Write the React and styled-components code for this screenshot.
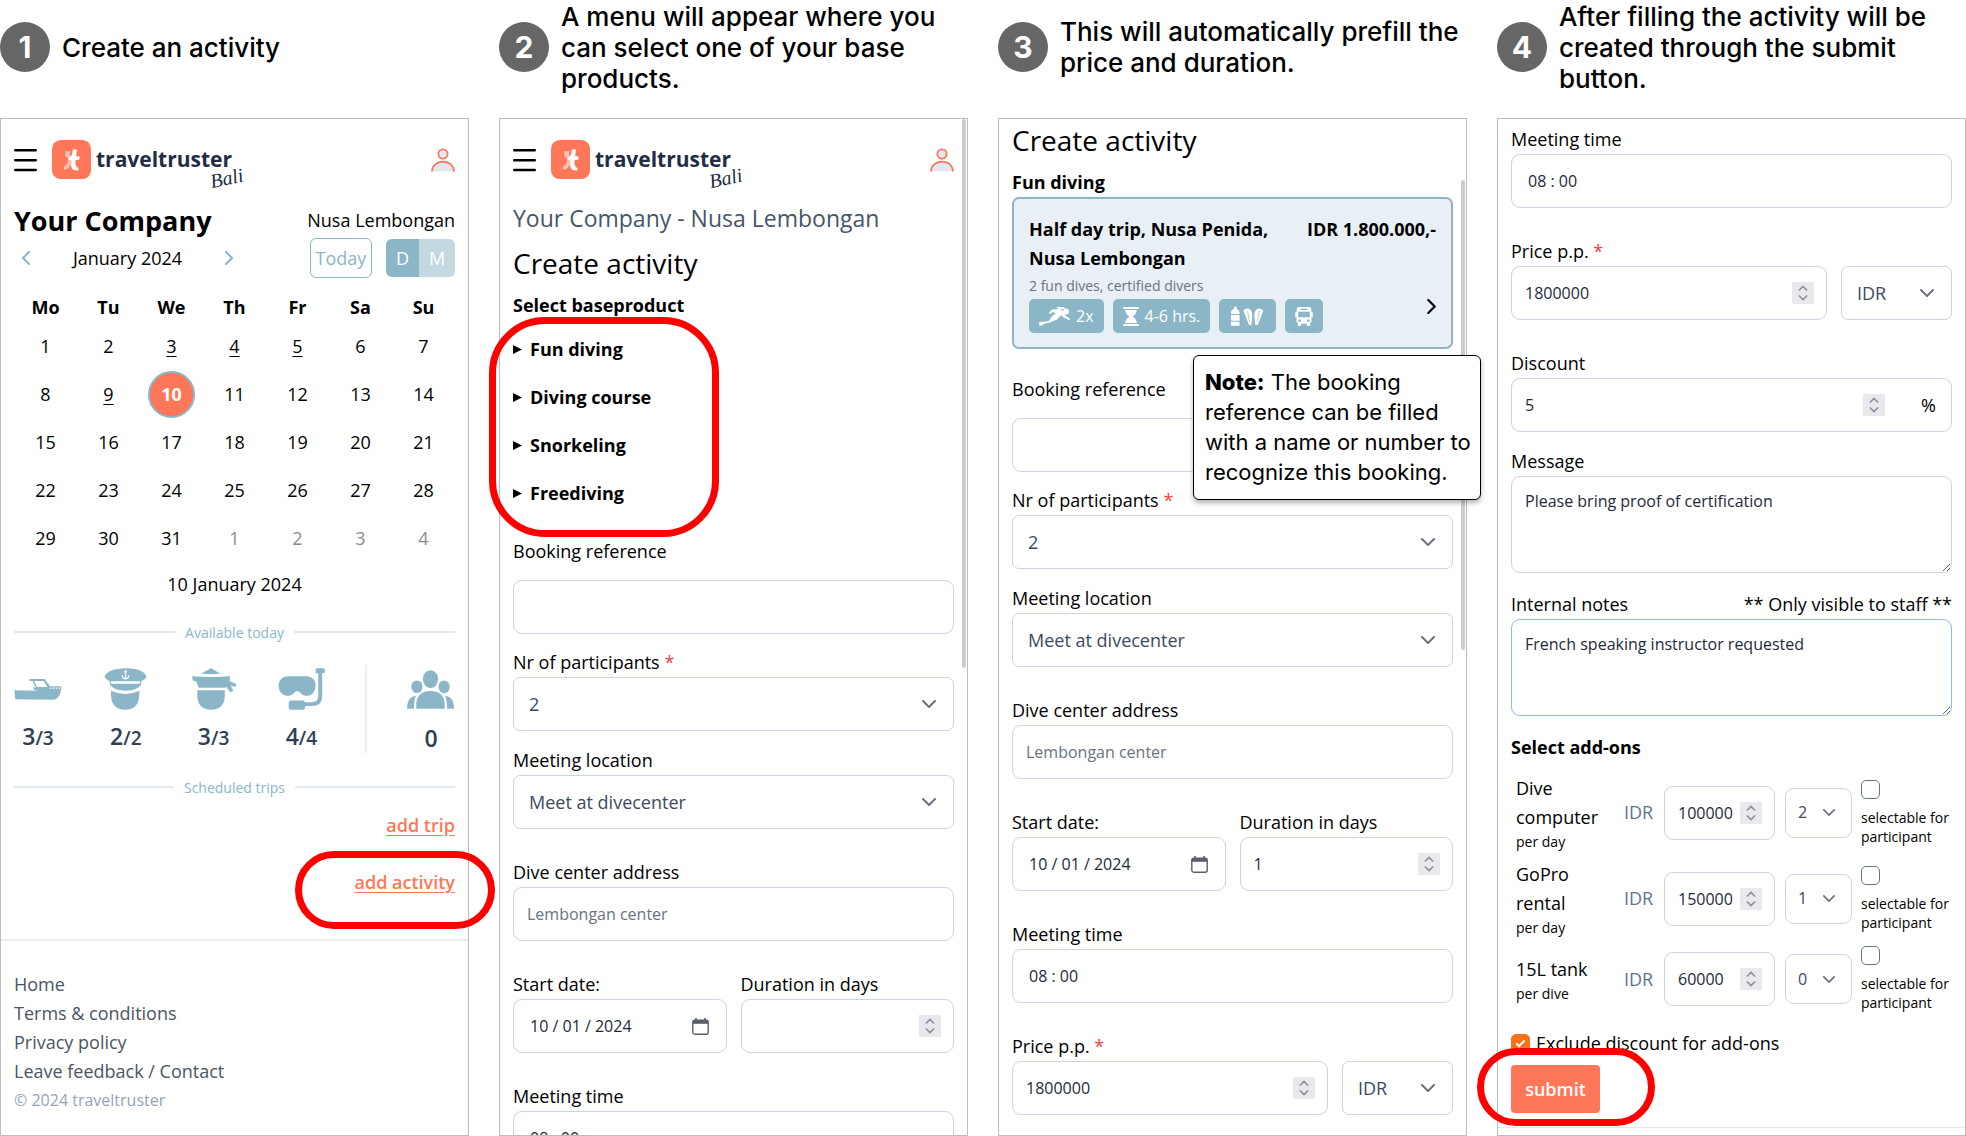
import React, { useId } from "react";
import styled, { createGlobalStyle, css } from "styled-components";

const color = {
  teal: "#8bb6c8",
  tealSoft: "#c3d9e2",
  tealPale: "#e8f0f6",
  coral: "#ff7759",
  ring: "#ff0000",
  frame: "#bdbdbd",
  line: "#e2e8f0",
  field: "#cbd5e1",
  ink: "#1e293b",
  slate: "#475569",
  mute: "#6b7280",
};

const Global = createGlobalStyle`
  *, *::before, *::after { box-sizing: border-box; }
  body { margin: 0; background: #fff; color: #000; font-family: "Open Sans", "Noto Sans", sans-serif; font-size: 18px; line-height: 29px; }
  h1, h2, h3, p, ol, ul { margin: 0; padding: 0; font: inherit; }
  button, input, select, textarea { font: inherit; color: inherit; margin: 0; }
  button { cursor: pointer; }
`;

/* ---------- page ---------- */

const Page = styled.main`
  display: grid;
  grid-template-columns: repeat(4, minmax(0, 1fr));
  gap: 30px;
  height: 100vh;
`;
const Column = styled.section`
  position: relative;
  display: flex;
  flex-direction: column;
  min-height: 0;
`;
const StepHeader = styled.header`
  display: flex;
  align-items: center;
  gap: 12px;
  min-height: 94px;
  margin-bottom: 24px;
  font-family: Inter, sans-serif;
`;
const StepNumber = styled.span`
  flex: none;
  display: grid;
  place-items: center;
  width: 50px;
  height: 50px;
  border-radius: 50%;
  background: #666;
  color: #fff;
  font-size: 30px;
  font-weight: 700;
`;
const StepTitle = styled.h2`
  font-size: 26px;
  line-height: 31px;
  font-weight: 500;
`;
const Panel = styled.div`
  position: relative;
  flex: 1;
  min-height: 0;
  overflow: hidden;
  border: 1px solid ${color.frame};
  padding: ${(p) => p.$top}px 13px 0;
`;
const ScrollThumb = styled.div`
  position: absolute;
  right: 1px;
  top: ${(p) => p.$top}px;
  width: 4px;
  height: ${(p) => p.$length}px;
  border-radius: 2px;
  background: #ccc;
`;
const Ring = styled.div`
  position: absolute;
  border: 7px solid ${color.ring};
  pointer-events: none;
`;
const TripRing = styled(Ring)`
  right: -26px;
  top: 851px;
  width: 200px;
  height: 78px;
  border-radius: 39px;
`;
const MenuRing = styled(Ring)`
  left: -10px;
  top: 317px;
  width: 230px;
  height: 220px;
  border-radius: 56px;
`;
const SubmitRing = styled(Ring)`
  left: -20px;
  top: 1048px;
  width: 178px;
  height: 78px;
  border-radius: 39px;
`;
const Note = styled.aside`
  position: absolute;
  right: -14px;
  top: 355px;
  width: 288px;
  padding: 11px 0 12px 11px;
  border: 1px solid #000;
  border-radius: 6px;
  background: #fff;
  box-shadow: 0 3px 5px rgba(0, 0, 0, 0.3);
  font-family: Inter, sans-serif;
  font-size: 22px;
  line-height: 30px;
  strong { font-weight: 800; }
`;

/* ---------- brand bar ---------- */

const Bar = styled.div`
  display: flex;
  align-items: center;
  height: 39px;
  margin-bottom: 24px;
`;
const IconButton = styled.button`
  display: flex;
  padding: 0;
  border: 0;
  background: none;
`;
const Brand = styled.a`
  position: relative;
  display: flex;
  align-items: center;
  gap: 5px;
  margin: 0 auto 0 15px;
  color: #222d45;
  font-size: 21px;
  font-weight: 700;
  text-decoration: none;
`;
const Region = styled.span`
  position: absolute;
  right: -11px;
  bottom: -14px;
  transform: rotate(-12deg);
  font-family: "Liberation Serif", serif;
  font-style: italic;
  font-weight: 400;
  font-size: 20px;
`;

/* ---------- calendar ---------- */

const Between = styled.div`
  display: flex;
  align-items: center;
  justify-content: space-between;
`;
const Company = styled.h1`
  font-size: 27px;
  line-height: 35px;
  font-weight: 700;
`;
const Tools = styled(Between)`
  height: 40px;
  margin-bottom: 15px;
`;
const MonthNav = styled.div`
  display: flex;
  align-items: center;
  justify-content: space-between;
  width: 211px;
  margin-left: 8px;
`;
const Toggles = styled.div`
  display: flex;
  align-items: center;
  gap: 14px;
`;
const TodayButton = styled.button`
  width: 62px;
  height: 40px;
  padding: 0;
  border: 1px solid ${color.teal};
  border-radius: 6px;
  background: #fff;
  color: ${color.teal};
`;
const ModeGroup = styled.div`
  display: flex;
  border-radius: 6px;
  overflow: hidden;
`;
const ModeButton = styled.button`
  width: ${(p) => (p.$on ? 33 : 36)}px;
  height: 38px;
  padding: 0;
  border: 0;
  background: ${(p) => (p.$on ? color.teal : color.tealSoft)};
  color: #fff;
`;
const Calendar = styled.table`
  width: 100%;
  table-layout: fixed;
  border-collapse: collapse;
  text-align: center;
  th { height: 29px; padding: 0; font-weight: 700; }
  td { height: 48px; padding: 0; }
`;
const Day = styled.span`
  ${(p) => p.$other && css`color: #8c8c8c;`}
  ${(p) => p.$linked && css`text-decoration: underline; text-underline-offset: 3px;`}
  ${(p) => p.$today && css`
    display: grid;
    place-items: center;
    width: 47px;
    height: 47px;
    margin: 0 auto;
    border: 2px solid ${color.teal};
    border-radius: 50%;
    background: ${color.coral};
    color: #fff;
    font-weight: 700;
  `}
`;
const Selected = styled.p`
  margin: 8px 0 20px;
  text-align: center;
`;
const Divider = styled.h3`
  display: flex;
  align-items: center;
  gap: 10px;
  height: 26px;
  color: ${color.teal};
  font-size: 14px;
  &::before, &::after { content: ""; flex: 1; height: 2px; background: ${color.line}; }
`;
const Resources = styled.ul`
  display: flex;
  justify-content: space-between;
  align-items: stretch;
  height: 88px;
  margin: 20px 0 21px;
  list-style: none;
`;
const Resource = styled.li`
  display: flex;
  flex-direction: column;
  align-items: center;
  justify-content: space-between;
  width: 48px;
  padding: 3px 0 0;
  color: #2f3e54;
  font-size: 23px;
  font-weight: 600;
  small { font-size: 19px; }
`;
const Art = styled.span`
  display: flex;
  align-items: center;
  height: 42px;
  color: ${color.teal};
`;
const Splitter = styled.li`
  width: 2px;
  background: #e5f0f5;
`;
const Actions = styled.div`
  display: flex;
  flex-direction: column;
  align-items: flex-end;
  gap: 28px;
  margin: 11px 0 42px;
`;
const ActionLink = styled.a`
  color: ${color.coral};
  font-weight: 600;
  text-underline-offset: 3px;
`;
const Footer = styled.footer`
  display: flex;
  flex-direction: column;
  align-items: flex-start;
  margin: 0 -13px;
  padding: 29px 13px 0;
  border-top: 2px solid #e9edf3;
`;
const FootLink = styled.a`
  color: #4b5563;
  text-decoration: none;
`;
const Copyright = styled.small`
  color: #94a3b8;
  font-size: 16px;
`;

/* ---------- forms ---------- */

const Crumb = styled.p`
  margin-bottom: 13px;
  color: ${color.slate};
  font-size: 23px;
  line-height: 30px;
  font-weight: 500;
`;
const FormTitle = styled.h1`
  margin-bottom: 10px;
  font-size: 28px;
  line-height: 35px;
  font-weight: 500;
`;
const Strong = styled.h3`
  font-weight: 700;
`;
const Menu = styled.ul`
  margin: 5px 0 20px;
  list-style: none;
`;
const MenuItem = styled.li`
  height: 48px;
  display: flex;
  align-items: center;
`;
const MenuButton = styled.button`
  display: flex;
  align-items: center;
  gap: 8px;
  padding: 0;
  border: 0;
  background: none;
  font-weight: 700;
`;
const FieldBlock = styled.div`
  display: flex;
  flex-direction: column;
  min-width: 0;
  flex: 1;
  gap: ${(p) => p.$inner || 0}px;
  margin-bottom: ${(p) => p.$after || 0}px;
`;
const LabelRow = styled.div`
  display: flex;
  justify-content: space-between;
`;
const Required = styled.span`
  color: #ef4444;
`;
const Controls = styled.div`
  display: flex;
  gap: 14px;
  align-items: center;
`;
const Frame = styled.div`
  position: relative;
  display: flex;
  align-items: center;
  flex: ${(p) => (p.$width ? "none" : 1)};
  width: ${(p) => (p.$width ? p.$width + "px" : "auto")};
  min-width: 0;
  height: ${(p) => p.$height || 54}px;
  min-height: ${(p) => p.$height || 54}px;
  border: 1px solid ${color.field};
  border-radius: ${(p) => p.$radius || 9}px;
  padding-right: ${(p) => p.$end || 0}px;
  background: #fff;
`;
const Input = styled.input`
  flex: 1;
  min-width: 0;
  width: 100%;
  height: 50px;
  padding: 0 0 0 ${(p) => p.$start || 13}px;
  border: 0;
  outline: 0;
  background: none;
  color: ${color.ink};
  font-size: 16px;
  appearance: textfield;
  &::placeholder { color: ${color.mute}; opacity: 1; }
  &::-webkit-inner-spin-button { appearance: none; margin: 0; }
`;
const Select = styled.select`
  width: 100%;
  height: 100%;
  padding: 0 0 0 ${(p) => p.$start || 15}px;
  border: 0;
  outline: 0;
  appearance: none;
  background: none;
  color: #3d4a5e;
  font-size: ${(p) => p.$size || 18}px;
`;
const Caret = styled.span`
  position: absolute;
  right: ${(p) => p.$right || 17}px;
  top: 0;
  bottom: 0;
  display: flex;
  align-items: center;
  pointer-events: none;
`;
const Spin = styled.span`
  flex: none;
  display: grid;
  place-items: center;
  width: 22px;
  height: 22px;
  background: #e9e8ed;
`;
const Unit = styled.span`
  padding-left: 36px;
  font-size: 18px;
`;
const TextArea = styled.textarea`
  display: block;
  width: 100%;
  height: 97px;
  padding: 10px 13px;
  border: 1px solid ${(p) => (p.$active ? "#93b8ec" : color.field)};
  border-radius: 9px;
  outline: 0;
  resize: vertical;
  color: ${color.ink};
  font-size: 16px;
`;

/* ---------- product card ---------- */

const Card = styled.article`
  height: 152px;
  margin-bottom: 26px;
  padding: 16px 15px 14px;
  border: 2px solid ${color.teal};
  border-radius: 7px;
  background: ${color.tealPale};
`;
const CardHead = styled.div`
  display: flex;
  justify-content: space-between;
  gap: 12px;
  font-weight: 700;
`;
const CardTitle = styled.h3`
  max-width: 250px;
  font-weight: 700;
`;
const Price = styled.span`
  white-space: nowrap;
`;
const CardText = styled.p`
  color: ${color.mute};
  font-size: 14px;
  line-height: 26px;
`;
const CardFoot = styled.div`
  display: flex;
  align-items: flex-start;
  justify-content: space-between;
`;
const Badges = styled.ul`
  display: flex;
  gap: 9px;
  list-style: none;
`;
const Badge = styled.li`
  display: flex;
  align-items: center;
  gap: 6px;
  height: 34px;
  padding: 0 10px;
  border-radius: 5px;
  background: ${color.teal};
  color: #fff;
  font-size: 16px;
`;

/* ---------- add-ons ---------- */

const AddOns = styled.table`
  width: 100%;
  margin: 8px 0 12px;
  border-collapse: collapse;
  table-layout: fixed;
  text-align: left;
  th, td { padding: 4px 5px 5px; vertical-align: middle; font-weight: 400; }
  td:last-child { padding-right: 0; }
`;
const Col = styled.col`
  width: ${(p) => p.$w}px;
`;
const Small = styled.small`
  display: block;
  font-size: 14px;
  line-height: 19px;
`;
const Currency = styled.span`
  color: #64748b;
`;
const Pick = styled.label`
  display: flex;
  flex-direction: column;
  align-items: flex-start;
  gap: 9px;
`;
const Tick = styled.input`
  flex: none;
  display: grid;
  place-items: center;
  width: 19px;
  height: 19px;
  margin: 0;
  appearance: none;
  border: 1px solid #64748b;
  border-radius: 5px;
  background: #fff;
  &:checked { border-color: #f97316; background: #f97316; }
  &:checked::after {
    content: "";
    width: 5px;
    height: 9px;
    margin-top: -2px;
    border: solid #fff;
    border-width: 0 2px 2px 0;
    transform: rotate(45deg);
  }
`;
const Exclude = styled.label`
  display: flex;
  align-items: center;
  gap: 6px;
  margin-bottom: 7px;
`;
const Submit = styled.button`
  display: block;
  width: 89px;
  height: 48px;
  padding: 0;
  border: 0;
  border-radius: 4px;
  background: ${color.coral};
  color: #fff;
  font-weight: 600;
`;
const Rule = styled.hr`
  height: 1px;
  margin: 14px -13px 0;
  border: 0;
  background: ${color.line};
`;

/* ---------- drawings ---------- */

const Chevron = ({ dir = "down", w = 14, h = 8, stroke = "#6b7280", sw = 2 }) => {
  const d = { down: "M1 1l6 6 6-6", left: "M7 1L1 7l6 6", right: "M1 1l6 6-6 6" }[dir];
  const box = dir === "down" ? "0 0 14 8" : "0 0 8 14";
  return (
    <svg width={w} height={h} viewBox={box} fill="none" stroke={stroke} strokeWidth={sw} strokeLinecap="round" aria-hidden="true">
      <path d={d} />
    </svg>
  );
};
const BurgerIcon = () => (
  <svg width="23" height="24" viewBox="0 0 23 24" stroke="#000" strokeWidth="2.4" strokeLinecap="round" aria-hidden="true">
    <path d="M1.2 2.2h20.6M1.2 12.2h20.6M1.2 22h20.6" />
  </svg>
);
const UserIcon = () => (
  <svg width="24" height="24" viewBox="0 0 24 24" stroke={color.coral} strokeWidth="1.8" fill="#e2e8f0" aria-hidden="true">
    <circle cx="12" cy="6" r="4.6" />
    <path d="M1 23.5C1 17.6 5.8 13.6 12 13.6s11 4 11 9.9" />
  </svg>
);
const LogoMark = () => (
  <svg width="39" height="39" viewBox="0 0 115 115" aria-hidden="true">
    <rect width="115" height="115" rx="26" fill={color.coral} />
    <path d="M39 32q8 3 15 0l-1 14 8 8-5 16q-4 16-20 18l-2-10q14-4 13-22-1-6-8-8z" fill="#ffc0b0" />
    <path d="M61 29q7-4 13 0l-3 19q6-1 11 1l-2 9-10 1q-4 17 8 24v7Q56 92 56 72l2-12-9-2 1-6q8-3 10-12z" fill="#fff" />
  </svg>
);
const SpinIcon = () => (
  <svg width="10" height="16" viewBox="0 0 10 16" fill="none" stroke="#8f8f9d" strokeWidth="1.7" strokeLinecap="round" aria-hidden="true">
    <path d="M1.4 5L5 1.4 8.6 5M1.4 11L5 14.6 8.6 11" />
  </svg>
);
const CalendarIcon = () => (
  <svg width="17" height="17" viewBox="0 0 17 17" fill="none" stroke="#5b5f6b" aria-hidden="true">
    <rect x=".8" y="2.2" width="15.4" height="14" rx="2" strokeWidth="1.4" />
    <path d="M1 4h15" strokeWidth="3.6" />
    <path d="M4 0v3M13 0v3" strokeWidth="1.6" />
  </svg>
);
const Triangle = () => (
  <svg width="9" height="9" viewBox="0 0 9 9" aria-hidden="true"><path d="M0 0l9 4.5L0 9z" /></svg>
);
const BoatIcon = () => (
  <svg width="48" height="21" viewBox="0 0 144 64" fill="currentColor" aria-hidden="true">
    <path d="M3 62L0 34l62 2q30-8 80-6 0 20-14 30-4 3-10 3z" />
    <path d="M46 0h46l18 24-4 10H60l-3-8h8L55 6h-9zm14 6l9 18h32L89 6z" fillRule="evenodd" />
    <path d="M108 22h34v4h-34zM113 24h4v10h-4zM122 24h4v10h-4zM131 24h4v10h-4zM139 24h3v10h-3z" />
  </svg>
);
const CaptainIcon = () => (
  <svg width="43" height="42" viewBox="0 0 128 128" fill="currentColor" aria-hidden="true">
    <path d="M0 26Q12 2 64 1t64 25q-4 12-18 14H18Q4 38 0 26z" />
    <path d="M16 38h4v10h88V38h4v12Q98 69 64 69T16 50z" />
    <path d="M20 69q44 20 86 0v15q-2 43-43 43T20 84z" />
    <g stroke="#fff" strokeWidth="4" fill="none">
      <circle cx="64" cy="11" r="2" />
      <path d="M64 14v18M54 22q1 11 10 11t10-11" />
    </g>
  </svg>
);
const CrewIcon = () => (
  <svg width="46" height="42" viewBox="0 0 138 128" fill="currentColor" aria-hidden="true">
    <path d="M60 1l28 16q-28 4-58 0z" />
    <path d="M2 25q58 5 116 0l-1 15 20 9-2 9-15-5 8 17-10 4-12-18-2 4H22l-6-17L4 37z" />
    <path d="M18 68h84v18q-2 41-42 41T18 86z" />
  </svg>
);
const MaskIcon = () => (
  <svg width="47" height="42" viewBox="0 0 142 128" fill="currentColor" aria-hidden="true">
    <path d="M30 25h56q28 2 28 29-2 31-28 31-12 0-19-10-9-10-18 0-8 10-19 10Q2 83 1 54 2 27 30 25z" />
    <path d="M128 8v78q0 24-26 24H78" fill="none" stroke="currentColor" strokeWidth="12" />
    <rect x="114" y="1" width="28" height="15" rx="4" />
    <rect x="32" y="99" width="50" height="28" rx="8" />
  </svg>
);
const GroupIcon = () => (
  <svg width="47" height="39" viewBox="0 0 142 117" fill="currentColor" aria-hidden="true">
    <ellipse cx="71" cy="27" rx="23" ry="27" />
    <ellipse cx="30" cy="50" rx="17" ry="19" />
    <ellipse cx="112" cy="50" rx="17" ry="19" />
    <path d="M28 117v-17q4-37 43-37t43 37v17z" />
    <path d="M0 117q0-38 27-39-6 14-6 39zM142 117q0-38-27-39 6 14 6 39z" />
  </svg>
);
const DiverIcon = () => (
  <svg width="31" height="19" viewBox="0 0 92 56" fill="#fff" aria-hidden="true">
    <path d="M0 44l28-2 12-16 10-8-10-3-6 6-5-4 10-10 24-1 8 6 8 14 13 8-2 5-16-7-8-8-14 14-20 8-14 3-16 8z" />
    <path d="M52 0h22l4 5-20 2z" />
    <circle cx="80" cy="13" r="9" />
  </svg>
);
const HourglassIcon = () => (
  <svg width="16" height="19" viewBox="0 0 46 56" fill="#fff" aria-hidden="true">
    <path d="M0 0h46v6H0zM0 50h46v6H0zM6 9h34q0 11-12 19 12 8 12 19H6q0-11 12-19Q6 20 6 9z" />
  </svg>
);
const GearIcon = () => (
  <svg width="37" height="20" viewBox="-5 0 106 58" fill="#fff" aria-hidden="true">
    <path d="M9 2h8v7q8 3 8 10v4H0v-4Q0 12 9 9zM0 26h25v17H0zM0 46h25v11H0z" />
    <path d="M36 14q8-10 18-5 8 4 8 20L60 54q-5 4-8 0z" />
    <path d="M94 14Q86 4 76 9q-8 4-8 20l2 25q5 4 8 0z" />
    <path d="M48 14l6 32M82 14l-6 32" stroke={color.teal} strokeWidth="2" />
  </svg>
);
const BusIcon = () => (
  <svg width="18" height="19" viewBox="0 0 52 56" fill="#fff" aria-hidden="true">
    <path fillRule="evenodd" d="M12 0h28q8 0 8 9v7h4v14h-4v16h-4v7q0 3-5 3t-5-3v-4H18v4q0 3-5 3t-5-3v-7H4V30H0V16h4V9q0-9 8-9zm4 5v4h20V5zM9 14v16h34V14zm4 22a4 4 0 100 8 4 4 0 000-8zm26 0a4 4 0 100 8 4 4 0 000-8z" />
  </svg>
);

/* ---------- composed parts ---------- */

const Step = ({ n, title, top, over, children }) => (
  <Column>
    <StepHeader>
      <StepNumber>{n}</StepNumber>
      <StepTitle>{title}</StepTitle>
    </StepHeader>
    <Panel $top={top}>{children}</Panel>
    {over}
  </Column>
);

const BrandBar = () => (
  <Bar>
    <IconButton type="button" aria-label="Menu"><BurgerIcon /></IconButton>
    <Brand href="#home">
      <LogoMark />
      traveltruster
      <Region>Bali</Region>
    </Brand>
    <IconButton type="button" aria-label="Account"><UserIcon /></IconButton>
  </Bar>
);

const Field = ({ label, required, aside, inner, after, children }) => {
  const id = useId();
  return (
    <FieldBlock $inner={inner} $after={after}>
      <LabelRow>
        <label htmlFor={id}>
          {label}
          {required && <Required> *</Required>}
        </label>
        {aside && <span>{aside}</span>}
      </LabelRow>
      {children(id)}
    </FieldBlock>
  );
};

const Choice = ({ id, value, width, label, small }) => (
  <Frame $width={width} $height={small ? 50 : 54} $radius={small ? 9 : 7}>
    <Select id={id} aria-label={label} defaultValue={value} $start={small ? 12 : 15} $size={small ? 16 : 18}>
      <option>{value}</option>
    </Select>
    <Caret $right={small ? 16 : 17}><Chevron w={small ? 12 : 14} h={small ? 7 : 8} /></Caret>
  </Frame>
);

const NumberBox = ({ id, value, width, unit, label, end = 12 }) => (
  <Frame $width={width} $end={unit ? 15 : end}>
    <Input id={id} aria-label={label} type="number" defaultValue={value} />
    <Spin><SpinIcon /></Spin>
    {unit && <Unit>{unit}</Unit>}
  </Frame>
);

const TextField = ({ label, value, placeholder, start, inner, after }) => (
  <Field label={label} inner={inner} after={after}>
    {(id) => (
      <Frame>
        <Input id={id} type="text" defaultValue={value} placeholder={placeholder} $start={start} />
      </Frame>
    )}
  </Field>
);

const PriceField = () => (
  <Field label="Price p.p." required after={29}>
    {(id) => (
      <Controls>
        <NumberBox id={id} value="1800000" />
        <Choice label="Currency" value="IDR" width={111} />
      </Controls>
    )}
  </Field>
);

const BookingFields = ({ duration }) => (
  <>
    <TextField label="Booking reference" inner={14} after={14} />
    <Field label="Nr of participants" required after={15}>
      {(id) => <Controls><Choice id={id} value="2" /></Controls>}
    </Field>
    <Field label="Meeting location" after={29}>
      {(id) => <Controls><Choice id={id} value="Meet at divecenter" /></Controls>}
    </Field>
    <TextField label="Dive center address" placeholder="Lembongan center" after={29} />
    <Controls>
      <Field label="Start date:" after={29}>
        {(id) => (
          <Frame $end={17}>
            <Input id={id} type="text" defaultValue="10 / 01 / 2024" $start={16} />
            <CalendarIcon />
          </Frame>
        )}
      </Field>
      <Field label="Duration in days" after={29}>
        {(id) => <NumberBox id={id} value={duration} />}
      </Field>
    </Controls>
    <TextField label="Meeting time" value="08 : 00" start={16} after={29} />
  </>
);

const weekdays = ["Mo", "Tu", "We", "Th", "Fr", "Sa", "Su"];
const weeks = [0, 1, 2, 3, 4].map((w) => weekdays.map((_, d) => w * 7 + d + 1));
const linkedDays = [3, 4, 5, 9];

const resources = [
  { name: "Boats", icon: <BoatIcon />, free: 3, total: 3 },
  { name: "Captains", icon: <CaptainIcon />, free: 2, total: 2 },
  { name: "Crew", icon: <CrewIcon />, free: 3, total: 3 },
  { name: "Instructors", icon: <MaskIcon />, free: 4, total: 4 },
];

const addOns = [
  { name: "Dive computer", per: "per day", price: "100000", count: "2" },
  { name: "GoPro rental", per: "per day", price: "150000", count: "1" },
  { name: "15L tank", per: "per dive", price: "60000", count: "0" },
];

const CalendarPanel = () => (
  <>
    <BrandBar />
    <Between>
      <Company>Your Company</Company>
      <span>Nusa Lembongan</span>
    </Between>
    <Tools>
      <MonthNav>
        <IconButton type="button" aria-label="Previous month"><Chevron dir="left" w={8} h={14} stroke={color.teal} /></IconButton>
        <span>January 2024</span>
        <IconButton type="button" aria-label="Next month"><Chevron dir="right" w={8} h={14} stroke={color.teal} /></IconButton>
      </MonthNav>
      <Toggles>
        <TodayButton type="button">Today</TodayButton>
        <ModeGroup>
          <ModeButton type="button" $on>D</ModeButton>
          <ModeButton type="button">M</ModeButton>
        </ModeGroup>
      </Toggles>
    </Tools>
    <Calendar>
      <thead>
        <tr>{weekdays.map((d) => <th key={d} scope="col">{d}</th>)}</tr>
      </thead>
      <tbody>
        {weeks.map((week) => (
          <tr key={week[0]}>
            {week.map((d) => (
              <td key={d}>
                <Day $today={d === 10} $linked={linkedDays.includes(d)} $other={d > 31}>{d > 31 ? d - 31 : d}</Day>
              </td>
            ))}
          </tr>
        ))}
      </tbody>
    </Calendar>
    <Selected>10 January 2024</Selected>
    <Divider>Available today</Divider>
    <Resources>
      {resources.map((r) => (
        <Resource key={r.name}>
          <Art>{r.icon}</Art>
          <span>{r.free}<small>/{r.total}</small></span>
        </Resource>
      ))}
      <Splitter aria-hidden="true" />
      <Resource>
        <Art><GroupIcon /></Art>
        <span>0</span>
      </Resource>
    </Resources>
    <Divider>Scheduled trips</Divider>
    <Actions>
      <ActionLink href="#trip">add trip</ActionLink>
      <ActionLink href="#activity">add activity</ActionLink>
    </Actions>
    <Footer>
      <FootLink href="#home">Home</FootLink>
      <FootLink href="#terms">Terms &amp; conditions</FootLink>
      <FootLink href="#privacy">Privacy policy</FootLink>
      <FootLink href="#contact">Leave feedback / Contact</FootLink>
      <Copyright>© 2024 traveltruster</Copyright>
    </Footer>
  </>
);

const ProductPanel = () => (
  <>
    <BrandBar />
    <Crumb>Your Company - Nusa Lembongan</Crumb>
    <FormTitle>Create activity</FormTitle>
    <Strong>Select baseproduct</Strong>
    <Menu>
      {["Fun diving", "Diving course", "Snorkeling", "Freediving"].map((name) => (
        <MenuItem key={name}>
          <MenuButton type="button"><Triangle />{name}</MenuButton>
        </MenuItem>
      ))}
    </Menu>
    <BookingFields />
    <ScrollThumb $top={0} $length={549} />
  </>
);

const PrefillPanel = () => (
  <>
    <FormTitle>Create activity</FormTitle>
    <Strong>Fun diving</Strong>
    <Card>
      <CardHead>
        <CardTitle>Half day trip, Nusa Penida, Nusa Lembongan</CardTitle>
        <Price>IDR 1.800.000,-</Price>
      </CardHead>
      <CardText>2 fun dives, certified divers</CardText>
      <CardFoot>
        <Badges>
          <Badge><DiverIcon />2x</Badge>
          <Badge><HourglassIcon />4-6 hrs.</Badge>
          <Badge><GearIcon /></Badge>
          <Badge><BusIcon /></Badge>
        </Badges>
        <IconButton type="button" aria-label="Open product"><Chevron dir="right" w={9} h={15} stroke="#000" /></IconButton>
      </CardFoot>
    </Card>
    <BookingFields duration="1" />
    <PriceField />
    <ScrollThumb $top={61} $length={470} />
  </>
);

const SubmitPanel = () => (
  <>
    <TextField label="Meeting time" value="08 : 00" start={16} after={29} />
    <PriceField />
    <Field label="Discount" after={15}>
      {(id) => <Controls><NumberBox id={id} value="5" unit="%" /></Controls>}
    </Field>
    <Field label="Message" after={17}>
      {(id) => <TextArea id={id} defaultValue="Please bring proof of certification" />}
    </Field>
    <Field label="Internal notes" aside="** Only visible to staff **" after={17}>
      {(id) => <TextArea id={id} $active defaultValue="French speaking instructor requested" />}
    </Field>
    <Strong>Select add-ons</Strong>
    <AddOns>
      <colgroup>
        <Col $w={108} />
        <Col $w={40} />
        <Col $w={121} />
        <Col $w={76} />
        <col />
      </colgroup>
      <tbody>
        {addOns.map((a) => (
          <tr key={a.name}>
            <th scope="row">{a.name}<Small>{a.per}</Small></th>
            <td><Currency>IDR</Currency></td>
            <td><NumberBox label={a.name + " price"} value={a.price} width={111} /></td>
            <td><Choice label={a.name + " count"} value={a.count} width={67} small /></td>
            <td>
              <Pick>
                <Tick type="checkbox" />
                <Small>selectable for participant</Small>
              </Pick>
            </td>
          </tr>
        ))}
      </tbody>
    </AddOns>
    <Exclude>
      <Tick type="checkbox" defaultChecked />
      Exclude discount for add-ons
    </Exclude>
    <Submit type="submit">submit</Submit>
    <Rule />
  </>
);

export default function App() {
  return (
    <>
      <Global />
      <Page>
        <Step n={1} title="Create an activity" top={21} over={<TripRing />}>
          <CalendarPanel />
        </Step>
        <Step n={2} title="A menu will appear where you can select one of your base products." top={21} over={<MenuRing />}>
          <ProductPanel />
        </Step>
        <Step
          n={3}
          title="This will automatically prefill the price and duration."
          top={4}
          over={<Note><strong>Note:</strong> The booking reference can be filled with a name or number to recognize this booking.</Note>}
        >
          <PrefillPanel />
        </Step>
        <Step n={4} title="After filling the activity will be created through the submit button." top={6} over={<SubmitRing />}>
          <SubmitPanel />
        </Step>
      </Page>
    </>
  );
}
